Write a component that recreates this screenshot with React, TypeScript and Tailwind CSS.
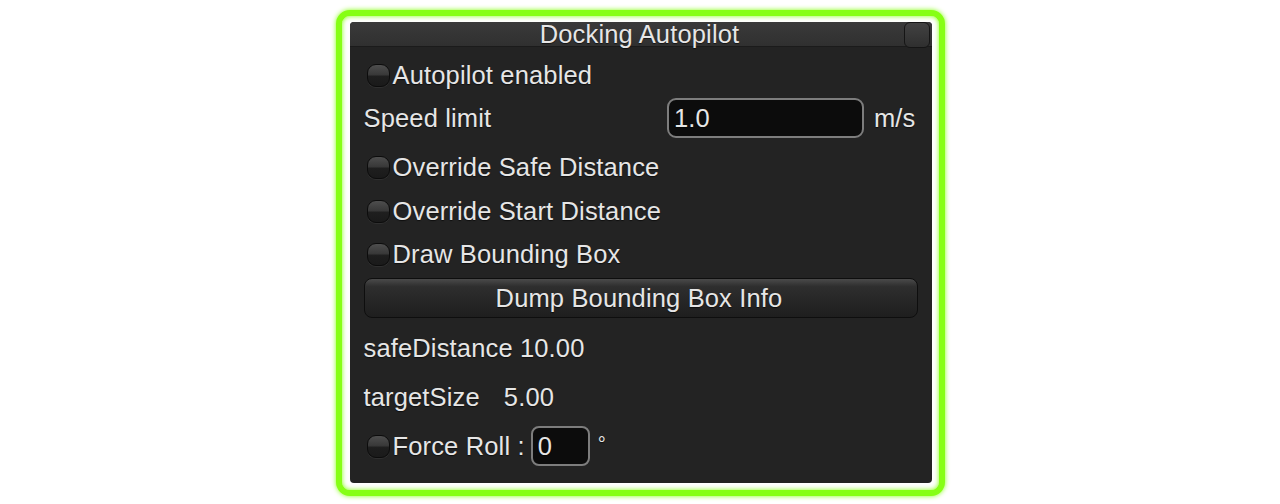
import React from "react";

function Check() {
  return (
    <div className="relative w-[23px] h-[23px] rounded-[9px] border border-[#0c0c0c] bg-[linear-gradient(#4e4e4e_0%,#393939_45%,#1e1e1e_55%,#1a1a1a_100%)] shrink-0 shadow-[0_1px_0_rgba(255,255,255,0.06)]" />
  );
}

function CheckRow({ label, mt }: { label: string; mt: string }) {
  return (
    <div className={`flex items-center h-[40px] ${mt}`}>
      <div className="ml-[3px]">
        <Check />
      </div>
      <span className="ml-[3px] mt-[2px]">{label}</span>
    </div>
  );
}

export default function App() {
  return (
    <div className="w-full h-[504px] bg-white flex justify-center pt-[10px]">
      <div className="w-[609px] h-[486px] rounded-[14px] border-[6px] border-[#86ff14] shadow-[0_0_5px_#86ff14,inset_0_0_5px_#86ff14] bg-white pl-[8px] pt-[6px] pr-[7px] pb-[7px]">
        <div
          className="w-[582px] h-[461px] rounded-[4px] bg-[#232323] flex flex-col text-[#e6e6e6] text-[25.5px] tracking-[0.15px] leading-none [text-shadow:0_1px_1px_rgba(0,0,0,0.6)]"
          style={{ fontFamily: '"Liberation Sans", Arial, sans-serif' }}
        >
          {/* title bar */}
          <div className="relative h-[25px] rounded-t-[4px] bg-[linear-gradient(#3a3a3a,#303030)] border-b border-[#1b1b1b] flex items-center justify-center">
            <span className="mt-[1px] mr-[2px]">Docking Autopilot</span>
            <div className="absolute right-[2px] top-0 w-[26px] h-[26px] rounded-[6px] border border-[#151515] bg-[linear-gradient(#424242,#2f2f2f)]" />
          </div>

          <div className="flex flex-col px-[14px]">
            <CheckRow label="Autopilot enabled" mt="mt-[8px]" />

            <div className="flex items-center h-[40px] mt-[3px]">
              <span className="flex-1 mt-[2px]">Speed limit</span>
              <div className="w-[197px] h-[40px] rounded-[9px] border-2 border-[#7d7d7d] bg-[#0c0c0c] flex items-center pl-[5px] pt-[2px]">
                1.0
              </div>
              <span className="ml-[10px] mr-[2px] mt-[2px]">m/s</span>
            </div>

            <CheckRow label="Override Safe Distance" mt="mt-[9px]" />
            <CheckRow label="Override Start Distance" mt="mt-[4px]" />
            <CheckRow label="Draw Bounding Box" mt="mt-[3px]" />

            <div className="mt-[4px] h-[40px] rounded-[8px] border border-[#0e0e0e] bg-[linear-gradient(#4a4a4a_0%,#2e2e2e_20%,#1e1e1e_100%)] flex items-center justify-center">
              <span className="mr-[3px] mt-[1px]">Dump Bounding Box Info</span>
            </div>

            <div className="flex items-center h-[40px] mt-[10px]">
              <span className="mt-[2px]">safeDistance 10.00</span>
            </div>

            <div className="flex items-center h-[40px] mt-[9px]">
              <span className="mt-[2px]">targetSize</span>
              <span className="ml-[24px] mt-[2px]">5.00</span>
            </div>

            <div className="flex items-center h-[40px] mt-[9px]">
              <div className="ml-[3px]">
                <Check />
              </div>
              <span className="ml-[3px] mt-[2px]">Force Roll :</span>
              <div className="ml-[6px] w-[59px] h-[40px] rounded-[8px] border-2 border-[#7d7d7d] bg-[#0c0c0c] flex items-center pl-[5px] pt-[2px]">
                0
              </div>
              <span className="ml-[8px] text-[20px] self-start mt-[8px]">°</span>
            </div>
          </div>
        </div>
      </div>
    </div>
  );
}
